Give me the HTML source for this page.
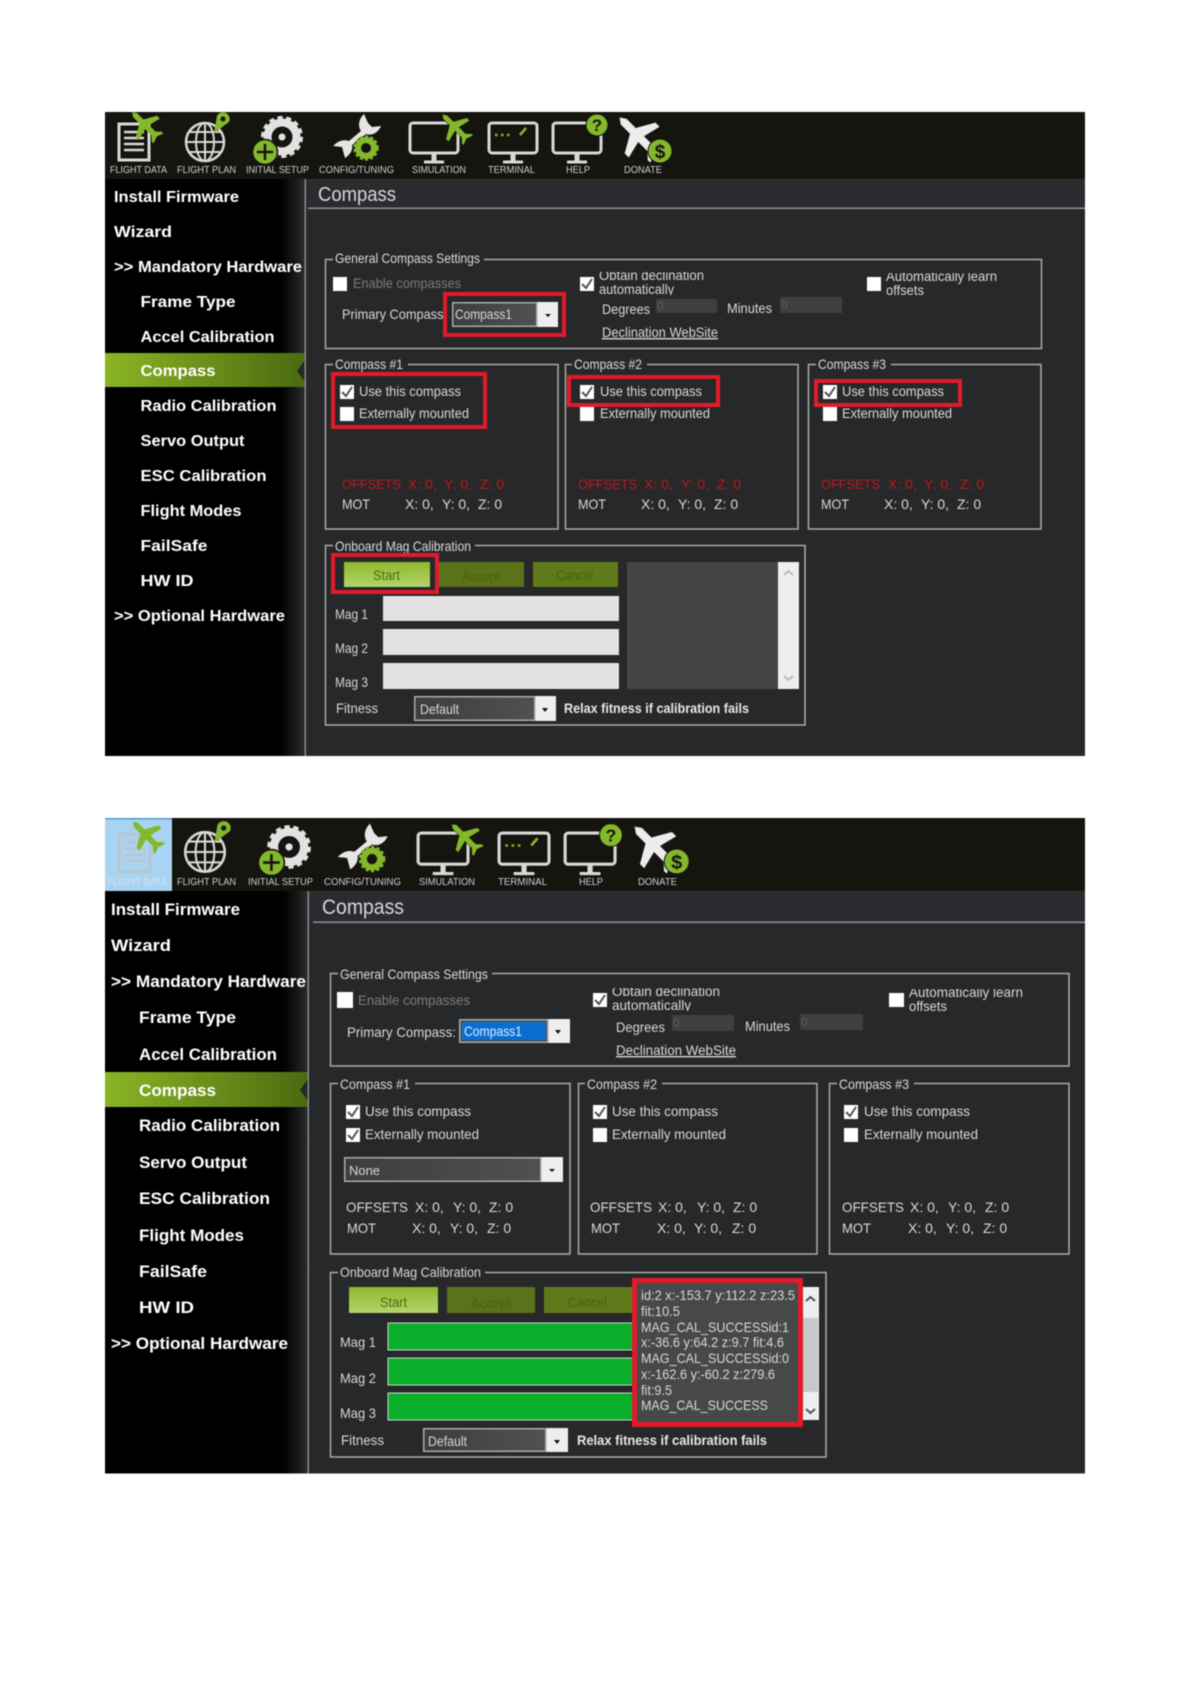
<!DOCTYPE html>
<html><head><meta charset="utf-8"><title>Compass</title>
<style>
html,body{margin:0;padding:0;background:#fff;width:1190px;height:1682px;overflow:hidden}
svg{display:block;filter:blur(.4px)}
text{font-family:"Liberation Sans",sans-serif;font-size:14px;fill:#d8d8d8}
.s{font-weight:bold;font-size:16px;fill:#fff}
.b{font-weight:bold;font-size:17px;fill:#fff}
.t{font-size:10px;fill:#c9cdd0}
.g{fill:#7a7c7e}
.r{fill:#b81a20}
.h{font-size:20px;fill:#d8d8d8}
.rb{font-weight:bold;fill:#e8e8e8}
.box{fill:none;stroke:#a9abac;stroke-width:1.5}
.red{fill:none;stroke:#e21b2a;stroke-width:4}
.cb{fill:#fff}
.ck{fill:none;stroke:#555;stroke-width:2}
.lg{fill:#26282a}
</style></head><body>
<svg width="1190" height="1682" viewBox="0 0 1190 1682" xmlns="http://www.w3.org/2000/svg">
<defs>
<linearGradient id="side" x1="0" x2="1" y1="0" y2="0"><stop offset=".88" stop-color="#000"/><stop offset="1" stop-color="#2a2c2e"/></linearGradient>
<linearGradient id="hl" x1="0" x2="1" y1="0" y2="0"><stop offset="0" stop-color="#8ab525"/><stop offset="1" stop-color="#4c6a10"/></linearGradient>
<linearGradient id="st" x1="0" x2="0" y1="0" y2="1"><stop offset="0" stop-color="#8fb82b"/><stop offset="1" stop-color="#b4d46c"/></linearGradient>
<linearGradient id="cbg" x1="0" x2="1" y1="0" y2="0"><stop offset="0" stop-color="#3c3d3f"/><stop offset="1" stop-color="#505153"/></linearGradient>
<g id="plane"><polygon points="0,-18 2.800,-14 2.800,-5 15,2 15,6 2.800,3 2.800,12 7,16.500 7,19 0,16.500 -7,19 -7,16.500 -2.800,12 -2.800,3 -15,6 -15,2 -2.800,-5 -2.800,-14" /></g>
<g id="doc"><rect x="119" y="124" width="30" height="36" fill="none" stroke="#d8d8d8" stroke-width="3"/><path d="M124 132H144M124 138H144M124 144H144M124 150H144" stroke="#d8d8d8" stroke-width="2.400"/><use href="#plane" transform="translate(145,125) rotate(-45)" fill="#84b82b"/></g>
<g id="globe"><circle cx="205" cy="142" r="19" fill="none" stroke="#d8d8d8" stroke-width="2.500"/><ellipse cx="205" cy="142" rx="9" ry="19" fill="none" stroke="#d8d8d8" stroke-width="2"/><path d="M205 123V161M186 142H224M189 132H221M189 152H221" stroke="#d8d8d8" stroke-width="2"/><path d="M214 133L217 116A6.500 6.500 0 1 1 229 122Z" fill="#84b82b"/><circle cx="223" cy="119" r="2.500" fill="#16140f"/></g>
<g id="gear"><circle cx="282" cy="137" r="14.500" fill="none" stroke="#e2e2e2" stroke-width="8"/><circle cx="282" cy="137" r="19" fill="none" stroke="#e2e2e2" stroke-width="4" stroke-dasharray="5 3.500"/><circle cx="282" cy="137" r="3.500" fill="#e2e2e2"/><circle cx="265" cy="152" r="12.500" fill="#84b82b" stroke="#16140f" stroke-width="1.500"/><path d="M257 152H273M265 144V160" stroke="#16140f" stroke-width="2.500"/></g>
<g id="wrench"><path d="M364 114C358 120 358 127 361 131L349 141C343 139 338 141 333 146L342 147L345 158C351 154 353 149 352 145L366 134C372 136 378 133 381 126L372 127L368 123Z" fill="#e6e6e6"/><circle cx="366" cy="148" r="12" fill="#16140f"/><circle cx="366" cy="148" r="8" fill="none" stroke="#84b82b" stroke-width="6"/><circle cx="366" cy="148" r="11.500" fill="none" stroke="#84b82b" stroke-width="2.500" stroke-dasharray="3 2.300"/></g>
<g id="mon"><rect x="0" y="0" width="48" height="30" rx="3" fill="none" stroke="#d8d8d8" stroke-width="3"/><path d="M24 30V38" stroke="#d8d8d8" stroke-width="5"/><path d="M14 39H34" stroke="#d8d8d8" stroke-width="3"/></g>
<g id="sim"><use href="#mon" x="410" y="123"/><use href="#plane" transform="translate(455,127) rotate(-45)" fill="#84b82b" stroke="#16140f" stroke-width=".5"/></g>
<g id="term"><use href="#mon" x="489" y="123"/><path d="M495 135H511" stroke="#84b82b" stroke-width="2.500" stroke-dasharray="2.500 3.500"/><path d="M520 135L526 128" stroke="#84b82b" stroke-width="2.500"/></g>
<g id="help"><use href="#mon" x="553" y="123"/><circle cx="597" cy="125" r="11" fill="#84b82b" stroke="#16140f" stroke-width="1"/></g>
<g id="don"><use href="#plane" transform="translate(638,136) rotate(-45) scale(1.450)" fill="#ececec"/><circle cx="660" cy="151" r="12" fill="#84b82b" stroke="#16140f" stroke-width="1"/></g>
<clipPath id="ca1"><rect x="595" y="272" width="130" height="23"/></clipPath>
<clipPath id="ca2"><rect x="880" y="273" width="130" height="30"/></clipPath>
<clipPath id="cb1"><rect x="608" y="988" width="130" height="23"/></clipPath>
<clipPath id="cb2"><rect x="905" y="989" width="130" height="30"/></clipPath>
</defs>

<!-- ===== PANEL A ===== -->
<rect x="105" y="112" width="980" height="644" fill="#26282a"/>
<rect x="105" y="112" width="980" height="67" fill="#16140f"/>
<rect x="305" y="179" width="780" height="29" fill="#2a2c2f"/>
<rect x="105" y="179" width="200" height="577" fill="url(#side)"/>
<rect x="105" y="353" width="200" height="34" fill="url(#hl)"/>
<polygon points="305,360 297,371 305,382" fill="#26282a"/>
<rect x="304.500" y="179" width="1.500" height="577" fill="#8a8c8e"/>
<rect x="308" y="207.500" width="777" height="1.500" fill="#8f9192"/>

<use href="#doc"/><use href="#globe"/><use href="#gear"/><use href="#wrench"/><use href="#sim"/><use href="#term"/><use href="#help"/><use href="#don"/>
<text x="597" y="131" text-anchor="middle" style="font-size:17px;font-weight:bold;fill:#16140f">?</text>
<text x="660" y="158" text-anchor="middle" style="font-size:19px;font-weight:bold;fill:#16140f">$</text>
<text class="t" x="110" y="173" textLength="57" lengthAdjust="spacingAndGlyphs">FLIGHT DATA</text>
<text class="t" x="177" y="173" textLength="59" lengthAdjust="spacingAndGlyphs">FLIGHT PLAN</text>
<text class="t" x="246" y="173" textLength="63" lengthAdjust="spacingAndGlyphs">INITIAL SETUP</text>
<text class="t" x="319" y="173" textLength="75" lengthAdjust="spacingAndGlyphs">CONFIG/TUNING</text>
<text class="t" x="412" y="173" textLength="54" lengthAdjust="spacingAndGlyphs">SIMULATION</text>
<text class="t" x="488" y="173" textLength="47" lengthAdjust="spacingAndGlyphs">TERMINAL</text>
<text class="t" x="566" y="173" textLength="24" lengthAdjust="spacingAndGlyphs">HELP</text>
<text class="t" x="624" y="173" textLength="38" lengthAdjust="spacingAndGlyphs">DONATE</text>

<text class="s" x="114" y="202" textLength="125" lengthAdjust="spacingAndGlyphs">Install Firmware</text>
<text class="s" x="114" y="237" textLength="58" lengthAdjust="spacingAndGlyphs">Wizard</text>
<text class="s" x="114" y="272" textLength="188" lengthAdjust="spacingAndGlyphs">&gt;&gt; Mandatory Hardware</text>
<text class="s" x="140.500" y="307" textLength="95" lengthAdjust="spacingAndGlyphs">Frame Type</text>
<text class="s" x="140.500" y="342" textLength="134" lengthAdjust="spacingAndGlyphs">Accel Calibration</text>
<text class="s" x="140.500" y="376" textLength="75" lengthAdjust="spacingAndGlyphs">Compass</text>
<text class="s" x="140.500" y="411" textLength="136" lengthAdjust="spacingAndGlyphs">Radio Calibration</text>
<text class="s" x="140.500" y="446" textLength="104" lengthAdjust="spacingAndGlyphs">Servo Output</text>
<text class="s" x="140.500" y="481" textLength="126" lengthAdjust="spacingAndGlyphs">ESC Calibration</text>
<text class="s" x="140.500" y="516" textLength="101" lengthAdjust="spacingAndGlyphs">Flight Modes</text>
<text class="s" x="140.500" y="551" textLength="67" lengthAdjust="spacingAndGlyphs">FailSafe</text>
<text class="s" x="140.500" y="586" textLength="53" lengthAdjust="spacingAndGlyphs">HW ID</text>
<text class="s" x="114" y="621" textLength="171" lengthAdjust="spacingAndGlyphs">&gt;&gt; Optional Hardware</text>

<text class="h" x="318" y="201" textLength="78" lengthAdjust="spacingAndGlyphs">Compass</text>

<!-- general A -->
<rect class="box" x="325.500" y="259.500" width="716" height="89"/>
<rect class="lg" x="333" y="252" width="151" height="14"/>
<text x="335" y="263" textLength="145" lengthAdjust="spacingAndGlyphs">General Compass Settings</text>
<rect class="cb" x="333" y="277" width="14" height="14"/>
<text class="g" x="353" y="288" textLength="108" lengthAdjust="spacingAndGlyphs">Enable compasses</text>
<text x="342" y="319" textLength="105" lengthAdjust="spacingAndGlyphs">Primary Compass:</text>
<rect x="452" y="302" width="106" height="25" fill="#eee"/>
<rect x="452.750" y="302.750" width="84" height="23.500" fill="url(#cbg)" stroke="#a9abac" stroke-width="1.500"/>
<polygon points="545,314 551,314 548,317" fill="#111"/>
<text x="455" y="319" textLength="57" lengthAdjust="spacingAndGlyphs">Compass1</text>
<rect class="red" x="445" y="294" width="119" height="41"/>
<rect class="cb" x="580" y="277" width="14" height="14"/><path class="ck" d="M582 284L586 288L592 279"/>
<g clip-path="url(#ca1)"><text x="599" y="280" textLength="105" lengthAdjust="spacingAndGlyphs">Obtain declination</text><text x="599" y="294" textLength="75" lengthAdjust="spacingAndGlyphs">automatically</text></g>
<text x="602" y="314" textLength="48" lengthAdjust="spacingAndGlyphs">Degrees</text>
<rect x="656" y="299" width="61" height="14" fill="#3d3f41"/><text x="657" y="310" style="font-size:12px;fill:#5c5e60">0</text>
<text x="727" y="313" textLength="45" lengthAdjust="spacingAndGlyphs">Minutes</text>
<rect x="780" y="297" width="62" height="16" fill="#3d3f41"/><text x="781" y="309" style="font-size:12px;fill:#5c5e60">0</text>
<text x="602" y="337" textLength="116" lengthAdjust="spacingAndGlyphs" text-decoration="underline">Declination WebSite</text>
<rect class="cb" x="867" y="277" width="14" height="14"/>
<g clip-path="url(#ca2)"><text x="886" y="281" textLength="111" lengthAdjust="spacingAndGlyphs">Automatically learn</text><text x="886" y="295" textLength="38" lengthAdjust="spacingAndGlyphs">offsets</text></g>

<!-- compass boxes A -->
<rect class="box" x="325.500" y="364.500" width="232.500" height="164.500"/>
<rect class="lg" x="333" y="357" width="75" height="14"/>
<text x="335" y="369" textLength="68" lengthAdjust="spacingAndGlyphs">Compass #1</text>
<rect class="box" x="565.500" y="364.500" width="232.500" height="164.500"/>
<rect class="lg" x="572" y="357" width="75" height="14"/>
<text x="574" y="369" textLength="68" lengthAdjust="spacingAndGlyphs">Compass #2</text>
<rect class="box" x="808.500" y="364.500" width="232.500" height="164.500"/>
<rect class="lg" x="816" y="357" width="75" height="14"/>
<text x="818" y="369" textLength="68" lengthAdjust="spacingAndGlyphs">Compass #3</text>

<rect class="cb" x="340" y="385" width="14" height="14"/><path class="ck" d="M342 392L346 396L352 387"/>
<text x="359" y="396" textLength="102" lengthAdjust="spacingAndGlyphs">Use this compass</text>
<rect class="cb" x="340" y="407" width="14" height="14"/>
<text x="359" y="418" textLength="110" lengthAdjust="spacingAndGlyphs">Externally mounted</text>
<rect class="red" x="333" y="374" width="152" height="53"/>
<rect class="cb" x="580" y="385" width="14" height="14"/><path class="ck" d="M582 392L586 396L592 387"/>
<text x="600" y="396" textLength="102" lengthAdjust="spacingAndGlyphs">Use this compass</text>
<rect class="cb" x="580" y="407" width="14" height="14"/>
<text x="600" y="418" textLength="110" lengthAdjust="spacingAndGlyphs">Externally mounted</text>
<rect class="red" x="569" y="377" width="149" height="28"/>
<rect class="cb" x="823" y="385" width="14" height="14"/><path class="ck" d="M825 392L829 396L835 387"/>
<text x="842" y="396" textLength="102" lengthAdjust="spacingAndGlyphs">Use this compass</text>
<rect class="cb" x="823" y="407" width="14" height="14"/>
<text x="842" y="418" textLength="110" lengthAdjust="spacingAndGlyphs">Externally mounted</text>
<rect class="red" x="816" y="381" width="144" height="24"/>

<text class="r" x="342" y="489" textLength="59" lengthAdjust="spacingAndGlyphs">OFFSETS</text><text class="r" x="408" y="489">X: 0,</text><text class="r" x="444" y="489">Y: 0,</text><text class="r" x="480" y="489">Z: 0</text>
<text x="342" y="509" textLength="28" lengthAdjust="spacingAndGlyphs">MOT</text><text x="405" y="509">X: 0,</text><text x="442" y="509">Y: 0,</text><text x="478" y="509">Z: 0</text>
<text class="r" x="578" y="489" textLength="59" lengthAdjust="spacingAndGlyphs">OFFSETS</text><text class="r" x="644" y="489">X: 0,</text><text class="r" x="681" y="489">Y: 0,</text><text class="r" x="717" y="489">Z: 0</text>
<text x="578" y="509" textLength="28" lengthAdjust="spacingAndGlyphs">MOT</text><text x="641" y="509">X: 0,</text><text x="678" y="509">Y: 0,</text><text x="714" y="509">Z: 0</text>
<text class="r" x="821" y="489" textLength="59" lengthAdjust="spacingAndGlyphs">OFFSETS</text><text class="r" x="888" y="489">X: 0,</text><text class="r" x="924" y="489">Y: 0,</text><text class="r" x="960" y="489">Z: 0</text>
<text x="821" y="509" textLength="28" lengthAdjust="spacingAndGlyphs">MOT</text><text x="884" y="509">X: 0,</text><text x="921" y="509">Y: 0,</text><text x="957" y="509">Z: 0</text>

<!-- onboard A -->
<rect class="box" x="325.500" y="545.500" width="479.500" height="179.500"/>
<rect class="lg" x="333" y="538" width="142" height="14"/>
<text x="335" y="551" textLength="136" lengthAdjust="spacingAndGlyphs">Onboard Mag Calibration</text>
<rect x="344" y="562" width="86" height="25" fill="url(#st)"/>
<text x="373" y="580" style="fill:#4d6a14" textLength="27" lengthAdjust="spacingAndGlyphs">Start</text>
<rect x="439" y="562" width="85" height="25" fill="#5a7219"/>
<text x="462" y="581" style="fill:#4a6012" textLength="38" lengthAdjust="spacingAndGlyphs">Accept</text>
<rect x="533" y="562" width="85" height="25" fill="#5f7a1a"/>
<text x="556" y="580" style="fill:#4a6012" textLength="37" lengthAdjust="spacingAndGlyphs">Cancel</text>
<rect class="red" x="333" y="555" width="104" height="37"/>
<rect x="383" y="596" width="236" height="25" fill="#e2e2e2"/>
<rect x="383" y="629" width="236" height="26" fill="#e2e2e2"/>
<rect x="383" y="663" width="236" height="26" fill="#e2e2e2"/>
<text x="335" y="619" textLength="33" lengthAdjust="spacingAndGlyphs">Mag 1</text>
<text x="335" y="653" textLength="33" lengthAdjust="spacingAndGlyphs">Mag 2</text>
<text x="335" y="687" textLength="33" lengthAdjust="spacingAndGlyphs">Mag 3</text>
<rect x="627" y="562" width="151" height="127" fill="#444547"/>
<rect x="778" y="562" width="21" height="127" fill="#eee"/>
<path d="M784 575L788.500 571L793 575M784 676L788.500 680L793 676" fill="none" stroke="#bcbcbc" stroke-width="2"/>
<text x="336" y="713" textLength="42" lengthAdjust="spacingAndGlyphs">Fitness</text>
<rect x="414" y="696" width="142" height="25" fill="#eee"/>
<rect x="414.750" y="696.750" width="120" height="23.500" fill="url(#cbg)" stroke="#a9abac" stroke-width="1.500"/>
<polygon points="542,708 548,708 545,712" fill="#111"/>
<text x="420" y="714" textLength="39" lengthAdjust="spacingAndGlyphs">Default</text>
<text class="rb" x="564" y="713" textLength="185" lengthAdjust="spacingAndGlyphs">Relax fitness if calibration fails</text>

<!-- ===== PANEL B ===== -->
<rect x="105" y="818" width="980" height="655.500" fill="#26282a"/>
<rect x="105" y="818" width="980" height="73" fill="#16140f"/>
<rect x="308" y="891" width="777" height="31" fill="#2a2c2f"/>
<rect x="105" y="891" width="203" height="582.500" fill="url(#side)"/>
<rect x="105" y="1072" width="203" height="35" fill="url(#hl)"/>
<polygon points="308,1079 300,1090 308,1101" fill="#26282a"/>
<rect x="307.500" y="891" width="1.500" height="582.500" fill="#8a8c8e"/>
<rect x="313" y="921.500" width="772" height="1.500" fill="#8f9192"/>
<rect x="105" y="818" width="67" height="73" fill="#a9d3f2"/>
<rect x="105" y="818" width="67" height="1.500" fill="#4a9ad8"/>

<g transform="translate(-4.700,705.100) scale(1.040)"><rect x="119" y="124" width="30" height="36" fill="none" stroke="#b9c6cf" stroke-width="3"/><path d="M124 132H144M124 138H144M124 144H144M124 150H144" stroke="#b9c6cf" stroke-width="2.400"/><use href="#plane" transform="translate(145,125) rotate(-45)" fill="#84b82b"/></g>
<g transform="translate(-8.200,704.300) scale(1.040)"><use href="#globe"/></g>
<g transform="translate(-4.200,704.500) scale(1.040)"><use href="#gear"/></g>
<g transform="translate(-8.600,705.100) scale(1.040)"><use href="#wrench"/></g>
<g transform="translate(-8.300,705.100) scale(1.040)"><use href="#sim"/></g>
<g transform="translate(-9.500,705.100) scale(1.040)"><use href="#term"/></g>
<g transform="translate(-10,705.100) scale(1.040)"><use href="#help"/><text x="597" y="131" text-anchor="middle" style="font-size:17px;font-weight:bold;fill:#16140f">?</text></g>
<g transform="translate(-9.700,704.400) scale(1.040)"><use href="#don"/><text x="660" y="158" text-anchor="middle" style="font-size:19px;font-weight:bold;fill:#16140f">$</text></g>
<text class="t" x="107" y="885" style="fill:#cfe4f3" textLength="60" lengthAdjust="spacingAndGlyphs">FLIGHT DATA</text>
<text class="t" x="177" y="885" textLength="59" lengthAdjust="spacingAndGlyphs">FLIGHT PLAN</text>
<text class="t" x="248" y="885" textLength="65" lengthAdjust="spacingAndGlyphs">INITIAL SETUP</text>
<text class="t" x="324" y="885" textLength="77" lengthAdjust="spacingAndGlyphs">CONFIG/TUNING</text>
<text class="t" x="419" y="885" textLength="56" lengthAdjust="spacingAndGlyphs">SIMULATION</text>
<text class="t" x="498" y="885" textLength="49" lengthAdjust="spacingAndGlyphs">TERMINAL</text>
<text class="t" x="579" y="885" textLength="24" lengthAdjust="spacingAndGlyphs">HELP</text>
<text class="t" x="638" y="885" textLength="39" lengthAdjust="spacingAndGlyphs">DONATE</text>

<text class="b" x="111" y="915" textLength="129" lengthAdjust="spacingAndGlyphs">Install Firmware</text>
<text class="b" x="111" y="951" textLength="60" lengthAdjust="spacingAndGlyphs">Wizard</text>
<text class="b" x="111" y="987" textLength="195" lengthAdjust="spacingAndGlyphs">&gt;&gt; Mandatory Hardware</text>
<text class="b" x="139" y="1023" textLength="97" lengthAdjust="spacingAndGlyphs">Frame Type</text>
<text class="b" x="139" y="1060" textLength="138" lengthAdjust="spacingAndGlyphs">Accel Calibration</text>
<text class="b" x="139" y="1096" textLength="77" lengthAdjust="spacingAndGlyphs">Compass</text>
<text class="b" x="139" y="1131" textLength="141" lengthAdjust="spacingAndGlyphs">Radio Calibration</text>
<text class="b" x="139" y="1168" textLength="108" lengthAdjust="spacingAndGlyphs">Servo Output</text>
<text class="b" x="139" y="1204" textLength="131" lengthAdjust="spacingAndGlyphs">ESC Calibration</text>
<text class="b" x="139" y="1241" textLength="105" lengthAdjust="spacingAndGlyphs">Flight Modes</text>
<text class="b" x="139" y="1277" textLength="68" lengthAdjust="spacingAndGlyphs">FailSafe</text>
<text class="b" x="139" y="1313" textLength="55" lengthAdjust="spacingAndGlyphs">HW ID</text>
<text class="b" x="111" y="1349" textLength="177" lengthAdjust="spacingAndGlyphs">&gt;&gt; Optional Hardware</text>

<text class="h" x="322" y="914" style="font-size:21px" textLength="82" lengthAdjust="spacingAndGlyphs">Compass</text>

<!-- general B -->
<rect class="box" x="330.500" y="973.500" width="738.500" height="92.500"/>
<rect class="lg" x="338" y="966" width="154" height="14"/>
<text x="340" y="979" textLength="148" lengthAdjust="spacingAndGlyphs">General Compass Settings</text>
<rect class="cb" x="337" y="992" width="16" height="16"/>
<text class="g" x="358" y="1005" textLength="112" lengthAdjust="spacingAndGlyphs">Enable compasses</text>
<text x="347" y="1037" textLength="109" lengthAdjust="spacingAndGlyphs">Primary Compass:</text>
<rect x="459" y="1019" width="111" height="24" fill="#eee"/>
<rect x="459.750" y="1019.750" width="88" height="22.500" fill="#4c4d4f" stroke="#a9abac" stroke-width="1.500"/>
<rect x="462" y="1022" width="84" height="18" fill="#0a6ed1"/>
<polygon points="555,1030 561,1030 558,1034" fill="#111"/>
<text x="464" y="1036" style="fill:#dfeafa" textLength="58" lengthAdjust="spacingAndGlyphs">Compass1</text>
<rect class="cb" x="593" y="993" width="14" height="14"/><path class="ck" d="M595 1000L599 1004L605 995"/>
<g clip-path="url(#cb1)"><text x="612" y="996" textLength="108" lengthAdjust="spacingAndGlyphs">Obtain declination</text><text x="612" y="1010" textLength="79" lengthAdjust="spacingAndGlyphs">automatically</text></g>
<text x="616" y="1032" textLength="49" lengthAdjust="spacingAndGlyphs">Degrees</text>
<rect x="672" y="1015" width="62" height="16" fill="#3d3f41"/><text x="673" y="1027" style="font-size:12px;fill:#5c5e60">0</text>
<text x="745" y="1031" textLength="45" lengthAdjust="spacingAndGlyphs">Minutes</text>
<rect x="800" y="1014" width="63" height="16" fill="#3d3f41"/><text x="801" y="1026" style="font-size:12px;fill:#5c5e60">0</text>
<text x="616" y="1055" textLength="120" lengthAdjust="spacingAndGlyphs" text-decoration="underline">Declination WebSite</text>
<rect class="cb" x="889" y="993" width="15" height="14"/>
<g clip-path="url(#cb2)"><text x="909" y="997" textLength="114" lengthAdjust="spacingAndGlyphs">Automatically learn</text><text x="909" y="1011" textLength="38" lengthAdjust="spacingAndGlyphs">offsets</text></g>

<!-- compass boxes B -->
<rect class="box" x="330.500" y="1083.500" width="239.500" height="170.500"/>
<rect class="lg" x="338" y="1076" width="77" height="14"/>
<text x="340" y="1089" textLength="70" lengthAdjust="spacingAndGlyphs">Compass #1</text>
<rect class="box" x="578.500" y="1083.500" width="238.500" height="170.500"/>
<rect class="lg" x="585" y="1076" width="77" height="14"/>
<text x="587" y="1089" textLength="70" lengthAdjust="spacingAndGlyphs">Compass #2</text>
<rect class="box" x="829.500" y="1083.500" width="239.500" height="170.500"/>
<rect class="lg" x="837" y="1076" width="77" height="14"/>
<text x="839" y="1089" textLength="70" lengthAdjust="spacingAndGlyphs">Compass #3</text>

<rect class="cb" x="346" y="1105" width="14" height="14"/><path class="ck" d="M348 1112L352 1116L358 1107"/>
<text x="365" y="1116" textLength="106" lengthAdjust="spacingAndGlyphs">Use this compass</text>
<rect class="cb" x="346" y="1128" width="14" height="14"/><path class="ck" d="M348 1135L352 1139L358 1130"/>
<text x="365" y="1139" textLength="114" lengthAdjust="spacingAndGlyphs">Externally mounted</text>
<rect x="344" y="1157" width="219" height="25" fill="#eee"/>
<rect x="344.750" y="1157.750" width="196" height="23.500" fill="url(#cbg)" stroke="#a9abac" stroke-width="1.500"/>
<polygon points="549,1169 555,1169 552,1172" fill="#111"/>
<text x="349" y="1175" style="font-size:13px" textLength="31" lengthAdjust="spacingAndGlyphs">None</text>
<rect class="cb" x="593" y="1105" width="14" height="14"/><path class="ck" d="M595 1112L599 1116L605 1107"/>
<text x="612" y="1116" textLength="106" lengthAdjust="spacingAndGlyphs">Use this compass</text>
<rect class="cb" x="593" y="1128" width="14" height="14"/>
<text x="612" y="1139" textLength="114" lengthAdjust="spacingAndGlyphs">Externally mounted</text>
<rect class="cb" x="844" y="1105" width="14" height="14"/><path class="ck" d="M846 1112L850 1116L856 1107"/>
<text x="864" y="1116" textLength="106" lengthAdjust="spacingAndGlyphs">Use this compass</text>
<rect class="cb" x="844" y="1128" width="14" height="14"/>
<text x="864" y="1139" textLength="114" lengthAdjust="spacingAndGlyphs">Externally mounted</text>

<text x="346" y="1212" textLength="62" lengthAdjust="spacingAndGlyphs">OFFSETS</text><text x="415" y="1212">X: 0,</text><text x="453" y="1212">Y: 0,</text><text x="489" y="1212">Z: 0</text>
<text x="347" y="1233" textLength="29" lengthAdjust="spacingAndGlyphs">MOT</text><text x="412" y="1233">X: 0,</text><text x="450" y="1233">Y: 0,</text><text x="487" y="1233">Z: 0</text>
<text x="590" y="1212" textLength="62" lengthAdjust="spacingAndGlyphs">OFFSETS</text><text x="658" y="1212">X: 0,</text><text x="697" y="1212">Y: 0,</text><text x="733" y="1212">Z: 0</text>
<text x="591" y="1233" textLength="29" lengthAdjust="spacingAndGlyphs">MOT</text><text x="657" y="1233">X: 0,</text><text x="694" y="1233">Y: 0,</text><text x="732" y="1233">Z: 0</text>
<text x="842" y="1212" textLength="62" lengthAdjust="spacingAndGlyphs">OFFSETS</text><text x="910" y="1212">X: 0,</text><text x="948" y="1212">Y: 0,</text><text x="985" y="1212">Z: 0</text>
<text x="842" y="1233" textLength="29" lengthAdjust="spacingAndGlyphs">MOT</text><text x="908" y="1233">X: 0,</text><text x="946" y="1233">Y: 0,</text><text x="983" y="1233">Z: 0</text>

<!-- onboard B -->
<rect class="box" x="330.500" y="1272.500" width="495.500" height="184.500"/>
<rect class="lg" x="338" y="1265" width="147" height="14"/>
<text x="340" y="1277" textLength="141" lengthAdjust="spacingAndGlyphs">Onboard Mag Calibration</text>
<rect x="349" y="1287" width="89" height="26" fill="url(#st)"/>
<text x="380" y="1307" style="fill:#4d6a14" textLength="27" lengthAdjust="spacingAndGlyphs">Start</text>
<rect x="447" y="1287" width="88" height="26" fill="#5a7219"/>
<text x="471" y="1308" style="fill:#4a6012" textLength="40" lengthAdjust="spacingAndGlyphs">Accept</text>
<rect x="544" y="1287" width="89" height="26" fill="#5f7a1a"/>
<text x="568" y="1307" style="fill:#4a6012" textLength="39" lengthAdjust="spacingAndGlyphs">Cancel</text>
<rect x="388" y="1323" width="245" height="27" fill="#0aae2a" stroke="#c9d8cc" stroke-width="1"/>
<rect x="388" y="1358" width="245" height="27" fill="#0aae2a" stroke="#c9d8cc" stroke-width="1"/>
<rect x="388" y="1393" width="245" height="27" fill="#0aae2a" stroke="#c9d8cc" stroke-width="1"/>
<text x="340" y="1347" textLength="36" lengthAdjust="spacingAndGlyphs">Mag 1</text>
<text x="340" y="1383" textLength="36" lengthAdjust="spacingAndGlyphs">Mag 2</text>
<text x="340" y="1418" textLength="36" lengthAdjust="spacingAndGlyphs">Mag 3</text>
<rect x="803" y="1287" width="16" height="133" fill="#eee"/>
<rect x="803" y="1318" width="15" height="74" fill="#c8c8c8"/>
<path d="M806 1301L810.500 1297L815 1301M806 1409L810.500 1413L815 1409" fill="none" stroke="#555" stroke-width="2"/>
<rect x="632" y="1278" width="171" height="149" fill="#47484a"/>
<rect x="634.500" y="1280.500" width="166" height="144" fill="none" stroke="#e21b2a" stroke-width="5"/>
<text x="641" y="1300" textLength="154" lengthAdjust="spacingAndGlyphs">id:2 x:-153.7 y:112.2 z:23.5</text>
<text x="641" y="1316" textLength="39" lengthAdjust="spacingAndGlyphs">fit:10.5</text>
<text x="641" y="1332" textLength="148" lengthAdjust="spacingAndGlyphs">MAG_CAL_SUCCESSid:1</text>
<text x="641" y="1347" textLength="143" lengthAdjust="spacingAndGlyphs">x:-36.6 y:64.2 z:9.7 fit:4.6</text>
<text x="641" y="1363" textLength="148" lengthAdjust="spacingAndGlyphs">MAG_CAL_SUCCESSid:0</text>
<text x="641" y="1379" textLength="134" lengthAdjust="spacingAndGlyphs">x:-162.6 y:-60.2 z:279.6</text>
<text x="641" y="1395" textLength="31" lengthAdjust="spacingAndGlyphs">fit:9.5</text>
<text x="641" y="1410" textLength="127" lengthAdjust="spacingAndGlyphs">MAG_CAL_SUCCESS</text>
<text x="341" y="1445" textLength="43" lengthAdjust="spacingAndGlyphs">Fitness</text>
<rect x="423" y="1428" width="145" height="24" fill="#eee"/>
<rect x="423.750" y="1428.750" width="122" height="22.500" fill="url(#cbg)" stroke="#a9abac" stroke-width="1.500"/>
<polygon points="554,1440 560,1440 557,1444" fill="#111"/>
<text x="428" y="1446" textLength="39" lengthAdjust="spacingAndGlyphs">Default</text>
<text class="rb" x="577" y="1445" textLength="190" lengthAdjust="spacingAndGlyphs">Relax fitness if calibration fails</text>
</svg>
</body></html>
